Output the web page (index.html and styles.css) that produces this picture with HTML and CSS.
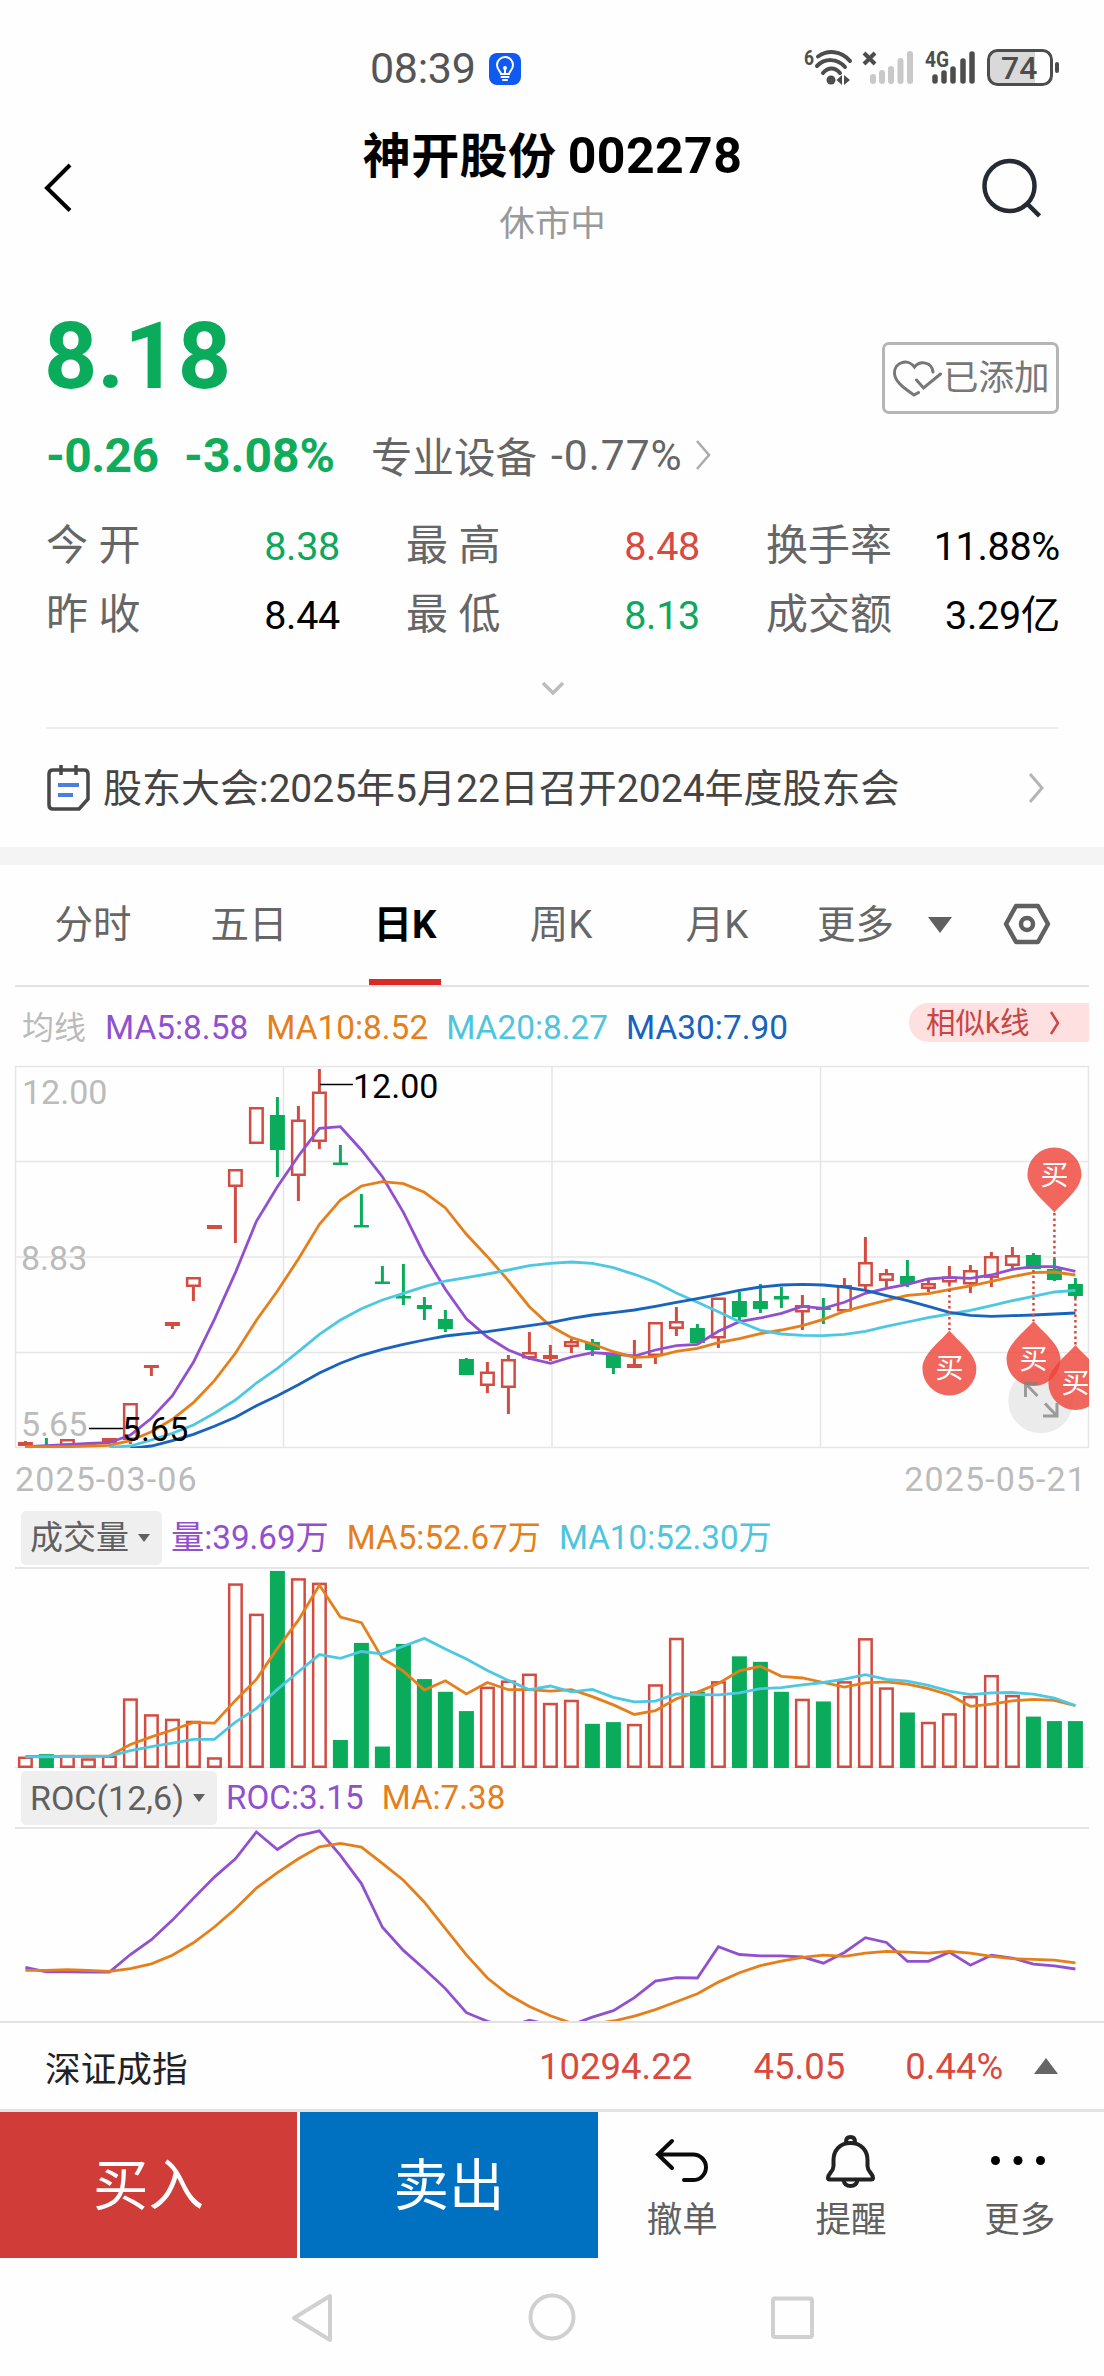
FILE: index.html
```html
<!DOCTYPE html>
<html lang="zh-CN">
<head>
<meta charset="utf-8">
<title>神开股份 002278</title>
<link rel="stylesheet" href="styles.css">
</head>
<body>
<div class="screen">
  <div class="status">
    <span class="clock">08:39</span>
    <svg class="bulb" width="32" height="32" viewBox="0 0 32 32"><rect width="32" height="32" rx="8" fill="#0f5af0"/><g fill="none" stroke="#fff" stroke-width="2" stroke-linecap="round"><path d="M12 21c0-2.500-4-4-4-9a8 8 0 0 1 16 0c0 5-4 6.500-4 9z"/><path d="M12.500 24h7M14 27h4M16 16v5"/><circle cx="16" cy="15" r="1"/></g></svg>
    <svg class="signals" width="270" height="44" viewBox="800 44 270 44">
      <g fill="#4d4d4d" font-family="Roboto, sans-serif" font-weight="700">
        <text x="804" y="65" font-size="21" textLength="10" lengthAdjust="spacingAndGlyphs">6</text>
        <text x="925" y="67" font-size="22" textLength="24" lengthAdjust="spacingAndGlyphs">4G</text>
        <circle cx="831" cy="80" r="4.500"/>
        <path d="M836.500 80l5.500-5v10zM844 75l6 5-6 5z"/>
      </g>
      <g fill="none" stroke="#4d4d4d" stroke-width="4" stroke-linecap="round">
        <path d="M818 56.500C827 50 841 50 850 61"/>
        <path d="M817 66C825 58 837 58 845 67"/>
        <path d="M823 73C828 67 835 67 840 73"/>
        <path d="M864 53l11 11M875 53l-11 11" stroke-linecap="butt"/>
      </g>
      <g stroke="#c9c9c9" stroke-width="6" stroke-linecap="round"><path d="M873 77v4M882 73v8M891 69v12M900.500 61v20M910 54v27"/></g>
      <g stroke="#4d4d4d" stroke-width="5.500" stroke-linecap="round"><path d="M935 77v4M944 73v8M953 69v12M963 61v20M972 54v27"/></g>
      <path d="M997 51h38v33h-38a8 8 0 0 1-8-8V59a8 8 0 0 1 8-8z" fill="#d9d9d9"/>
      <rect x="988.500" y="50.500" width="63" height="34" rx="9" fill="none" stroke="#4d4d4d" stroke-width="3"/>
      <path d="M1057 64v7" stroke="#4d4d4d" stroke-width="4" stroke-linecap="round"/>
      <text x="1001" y="79" font-family="Roboto, sans-serif" font-weight="500" font-size="32" fill="#4d4d4d">74</text>
    </svg>
  </div>

  <header class="header">
    <svg class="back" width="30" height="54" viewBox="44 161 30 54"><path d="M70 165L47 188l23 22.500" fill="none" stroke="#000" stroke-width="4"/></svg>
    <div class="heading">
      <h1 class="name">神开股份 <span class="code">002278</span></h1>
      <div class="session">休市中</div>
    </div>
    <svg class="search" width="60" height="60" viewBox="981 156 60 60"><g fill="none" stroke="#252a33" stroke-width="4.500"><circle cx="1009.500" cy="184" r="25"/><path d="M1026.500 201l13 13"/></g></svg>
  </header>

  <section class="quote">
    <div class="price-row">
      <div class="price">8.18</div>
      <div class="added">
        <svg width="50" height="40" viewBox="892 357 50 40"><path d="M918.500 391.500L914 394C905 388 895 381 894.500 372.500 894 361 908 357 914.500 366 920 359 932 361 933 371M916.500 379l7 8 17-14" fill="none" stroke="#777" stroke-width="3" stroke-linecap="round"/></svg>
        <span>已添加</span>
      </div>
    </div>
    <div class="change-row">
      <span class="chg">-0.26</span><span class="pct">-3.08%</span>
      <span class="sector">专业设备</span><span class="sector-pct">-0.77%</span>
      <svg width="18" height="32" viewBox="0 0 18 32"><path d="M2 2l12 14L2 30" fill="none" stroke="#aaa" stroke-width="2.500"/></svg>
    </div>
    <div class="stats">
      <div class="stat"><span class="lbl">今 开</span><span class="green">8.38</span></div>
      <div class="stat"><span class="lbl">最 高</span><span class="red">8.48</span></div>
      <div class="stat"><span class="lbl">换手率</span><span>11.88%</span></div>
      <div class="stat"><span class="lbl">昨 收</span><span>8.44</span></div>
      <div class="stat"><span class="lbl">最 低</span><span class="green">8.13</span></div>
      <div class="stat"><span class="lbl">成交额</span><span>3.29亿</span></div>
    </div>
    <div class="expand"><svg width="26" height="16" viewBox="0 0 26 16"><path d="M3 2l10 10L23 2" fill="none" stroke="#bdbdbd" stroke-width="3.500"/></svg></div>
    <div class="notice">
      <svg width="44" height="48" viewBox="47 764 44 48"><g fill="none" stroke="#484848" stroke-width="3.500"><path d="M53 770h31q4 0 4 4v25l-9 10H53q-4 0-4-4v-31q0-4 4-4zM61 765v10M76 765v10"/><path d="M58 785h21M58 795h15" stroke="#4a7fe0" stroke-width="4"/></g></svg>
      <span>股东大会:2025年5月22日召开2024年度股东会</span>
      <svg class="go" width="18" height="32" viewBox="0 0 18 32"><path d="M2 2l12 14L2 30" fill="none" stroke="#b5b5b5" stroke-width="3"/></svg>
    </div>
  </section>

  <nav class="tabs">
    <span>分时</span><span>五日</span><span class="on">日K</span><span>周K</span><span>月K</span>
    <span class="more">更多<svg width="24" height="16" viewBox="0 0 24 16"><path d="M0 0h24L12 16z" fill="#606060"/></svg></span>
    <svg class="gear" width="48" height="42" viewBox="1002 903 48 42"><g fill="none" stroke="#606060" stroke-width="4.500"><path d="M1015 906h22l10 18-10 18h-22l-10-18z" stroke-linejoin="round"/><circle cx="1026" cy="924" r="6"/></g></svg>
  </nav>

  <div class="legend">
    <span class="ma-title">均线</span><span class="purple">MA5:8.58</span><span class="orange">MA10:8.52</span><span class="cyan">MA20:8.27</span><span class="blue">MA30:7.90</span>
    <span class="similar">相似k线<svg width="12" height="24" viewBox="0 0 12 24"><path d="M2 1l7 11-7 11" fill="none" stroke="#d04444" stroke-width="2.500"/></svg></span>
  </div>

  <svg class="chart" width="1104" height="390" viewBox="0 10 1104 390">
    <defs>
      <clipPath id="plot"><rect x="15" y="16" width="1074" height="382"/></clipPath>
      <path id="pin" d="M0 0C7-9 27-23 27-38A27 27 0 0 0-27-38C-27-23-7-9 0 0z"/>
    </defs>
    <path d="M15.500 16.500h1073v381h-1073zM15 111.500h1074M15 207h1074M15 302.500h1074M283.500 16v382M552 16v382M820.500 16v382" fill="none" stroke="#e6e6e6" stroke-width="1.500"/>
    <g class="axis"><text x="22" y="54">12.00</text><text x="21" y="219.500">8.83</text><text x="21" y="386">5.65</text></g>
    <g clip-path="url(#plot)">
      <g id="candles"></g>
      <g id="averages"></g>
      <g class="mark"><path d="M320 34.500h33M89 378.500h34"/><text x="353" y="48">12.00</text><text x="122" y="391">5.65</text></g>
      <circle cx="1040.800" cy="350.700" r="32.500" fill="#ebebeb"/>
      <g class="dots"><path d="M1054.400 163v46M949.400 234v46M1033.500 220v51M1075.400 248v47"/></g>
      <g class="pins">
        <use href="#pin" transform="translate(1054.400 162.500)"/>
        <use href="#pin" transform="translate(949.400 280.500) scale(1 -1)"/>
        <use href="#pin" transform="translate(1033.500 271) scale(1 -1)"/>
        <use href="#pin" transform="translate(1075.400 295) scale(1 -1)"/>
      </g>
      <g class="pin-text"><text x="1054.400" y="135">买</text><text x="949.400" y="328">买</text><text x="1033.500" y="319">买</text><text x="1075.400" y="342.500">买</text></g>
      <path d="M1025.500 347v-13.500H1038M1026 334l11.500 12M1043 366h14v-13M1056.500 365.500L1045 353.500" fill="none" stroke="#808080" stroke-opacity=".75" stroke-width="3"/>
    </g>
  </svg>
  <div class="dates"><span>2025-03-06</span><span>2025-05-21</span></div>

  <div class="sub-head">
    <span class="pick vol-pick">成交量<i class="caret"></i></span><span class="purple">量:39.69万</span><span class="orange">MA5:52.67万</span><span class="cyan">MA10:52.30万</span>
  </div>
  <svg class="chart" width="1104" height="202" viewBox="0 67 1104 202">
    <path d="M15 68h1074" stroke="#e6e6e6" stroke-width="2"/><path d="M15 267.500h1074" stroke="#ececec"/>
    <g id="volume"></g>
  </svg>

  <div class="sub-head roc-head">
    <span class="pick roc-pick">ROC(12,6)<i class="caret"></i></span><span class="purple">ROC:3.15</span><span class="orange">MA:7.38</span>
  </div>
  <svg class="chart" width="1104" height="195" viewBox="0 326 1104 195">
    <path d="M15 328h1074" stroke="#e6e6e6" stroke-width="2"/>
    <g id="roc"></g>
  </svg>

  <div class="index">
    <span class="index-name">深证成指</span>
    <span class="idx-value">10294.22</span><span class="idx-change">45.05</span><span class="idx-pct">0.44%</span>
    <svg width="24" height="16" viewBox="0 0 24 16"><path d="M0 16h24L12 0z" fill="#666"/></svg>
  </div>

  <div class="actions">
    <div class="trade buy">买入</div>
    <div class="trade sell">卖出</div>
    <div class="tools">
      <div class="tool"><svg width="60" height="60" viewBox="652 2132 60 60"><path d="M672 2141l-14 13.500 14 13.500M658 2154.500h35a13 12.800 0 0 1 0 25.600h-9" fill="none" stroke="#0a0a0a" stroke-width="4" stroke-linecap="round"/></svg>撤单</div>
      <div class="tool"><svg width="60" height="60" viewBox="820 2132 60 60"><g fill="none" stroke="#222" stroke-width="4" stroke-linejoin="round"><path d="M845 2142q0-5 4.500-5t4.500 5M849.500 2143c-11 0-17 8-17 17v6c0 6-5.500 7-5.500 12q0 1.500 2 1.500h41q2 0 2-1.500c0-5-5.500-6-5.500-12v-6c0-9-6-17-17-17z"/><path d="M842.500 2180q1 6 7 6t7-6"/></g></svg>提醒</div>
      <div class="tool"><svg width="60" height="60" viewBox="990 2132 60 60"><g fill="#000"><circle cx="995.500" cy="2160.500" r="4.500"/><circle cx="1018" cy="2160.500" r="4.500"/><circle cx="1040.500" cy="2160.500" r="4.500"/></g></svg>更多</div>
    </div>
  </div>

  <svg class="navbar" width="1104" height="118" viewBox="0 2258 1104 118"><g fill="none" stroke="#d0d0d0" stroke-width="4" stroke-linejoin="round"><path d="M330 2296v44l-36-22z"/><circle cx="552" cy="2317" r="21.500"/><rect x="773" y="2298.500" width="39" height="38.500" rx="2"/></g></svg>
</div>
<script src="charts.js"></script>
</body>
</html>
```
FILE: charts.js
```js
const UP = '#d24c41', DOWN = '#0aac5c';
const PURPLE = '#9150cf', ORANGE = '#e57f1c', CYAN = '#4ec8e2', BLUE = '#1763bd';
const x = i => 25.4 + 21 * i;

// [direction, body top, body bottom, high, low]
const candles = [
  ['r',392,396,391,396],['g',395,397,388,397],['r',389,396,389,396],['r',393,396,393,396],['r',388,393,388,393],
  ['r',353,390,353,394],['r',315,318,315,326],['r',272,276,272,279],['r',227,237,227,251],['r',175,179,175,179],
  ['r',119,137,119,193],['r',57,94,57,94],['g',65,100,47,127],['r',69.500,126,56,151],['r',41.500,92,19,99],
  ['g',112.500,115,95,115],['g',175,177.500,144,177],['g',231.500,234,216,234],['g',246,248.500,214,255],['g',255,259,247,270],
  ['g',269,279,260,282],['g',309,325,308,325],['r',321.500,336,312,343],['r',309,338,305,364],['r',302,308.500,282,310],
  ['r',305,309,295,311],['r',291,297,289,303],['g',292,300,289,306],['g',304,318,304,324],['r',314,318,290,318],
  ['r',272,306,272,314],['r',271,279,257,286],['g',278,293,274,293],['r',247.500,288.500,248,298],['g',251,267,242,271],
  ['g',251,259,234,263],['g',246,249.500,237,258],['r',255,262.500,245,280],['g',258,260,248,274],['r',235,261.500,228,261],
  ['r',212,236.500,187,239],['r',223,231,219,237],['g',226,234,210,237],['r',233,239,228,242],['r',226.500,232.500,216,234],
  ['r',220,234.500,215,243],['r',206,228,202,237],['r',205,216,197,218],['g',205,219,203,219],['g',219,230,209,231],['g',234,246,228,248]
];

// Line series are scaled down to pixels when drawn.
const ma5 = [1190,1187,1184,1180,1178,1155,1105,1037,937,808,668,514,410,318,235,230,300,380,487,614,718,806,861,900,925,940,921,908,912,918,900,887,883,844,815,804,790,769,775,757,730,715,703,687,682,685,675,658,650,650,664];
const ma10 = [1190,1190,1190,1188,1186,1172,1145,1108,1058,992,910,811,723,627,523,450,408,395,401,427,474,553,620,692,770,828,863,882,905,922,920,904,895,878,866,851,840,827,808,784,767,751,736,731,719,708,694,680,668,666,675];
const ma20 = [1192,1188,1170,1150,1125,1090,1050,999,955,905,853,810,776,750,730,710,693,683,672,660,647,640,636,640,653,673,697,729,757,785,815,841,852,856,857,853,844,829,816,803,792,781,767,752,739,726,721];
const ma30 = [1195,1188,1172,1153,1129,1102,1067,1037,1004,969,940,916,898,883,870,858,851,845,836,827,818,805,795,788,780,769,757,746,734,721,711,705,703,705,711,721,737,752,769,787,796,799,797,795,792,789];
const volTop = [745,738,740,750,742,576,622,635,641,747,242,330,206,227,240,697,415,716,418,520,557,613,542,524,504,589,580,650,645,650,535,400,556,526,454,470,557,577,585,526,401,544,617,644,619,569,508,566,629,642,642];
const vma5 = [745,745,745,744,743,710,688,668,646,648,582,521,431,349,247,340,356,460,497,552,525,563,530,551,551,555,551,571,595,623,612,577,558,533,496,483,512,517,530,543,531,528,535,548,566,599,593,583,579,582,597];
const vma10 = [746,746,745,745,744,728,716,706,695,695,645,605,550,499,449,460,440,447,425,402,433,462,495,524,551,540,557,550,573,586,584,563,565,566,560,548,545,537,530,520,507,521,526,538,555,565,560,559,564,575,597];
const roc = [1357,1370,1370,1371,1371,1320,1277,1220,1157,1095,1042,964,1015,975,961,1032,1114,1241,1308,1362,1419,1489,1514,1530,1511,1524,1524,1502,1483,1445,1397,1387,1388,1297,1320,1324,1324,1327,1345,1314,1271,1285,1340,1340,1313,1351,1322,1330,1348,1353,1362];
const rocMa = [1366,1366,1364,1366,1369,1361,1347,1322,1286,1240,1187,1127,1082,1042,1007,997,1008,1055,1104,1168,1245,1321,1388,1436,1471,1498,1519,1522,1513,1499,1480,1457,1434,1400,1373,1352,1339,1328,1322,1325,1316,1311,1313,1316,1311,1316,1325,1332,1334,1336,1344];

const PRICE_SCALE = 3, SUB_SCALE = 2.904;

const line = (data, color, scale, start = 0) =>
  `<polyline fill="none" stroke="${color}" stroke-width="2.8" points="${data.map((v, i) => x(i + start).toFixed(1) + ',' + (v / scale).toFixed(1)).join(' ')}"/>`;

const body = (cx, top, bottom, up) => up && bottom - top > 5
  ? `<rect x="${cx - 6.25}" y="${top + 1.25}" width="12.5" height="${bottom - top - 2.5}" fill="#fefefe" stroke="${UP}" stroke-width="2.5"/>`
  : `<rect x="${cx - 7.5}" y="${top}" width="15" height="${bottom - top}" fill="${up ? UP : DOWN}"/>`;

document.getElementById('candles').innerHTML = candles.map(([d, t, b, h, l], i) =>
  `<path d="M${x(i)} ${h}V${l}" stroke="${d === 'r' ? UP : DOWN}" stroke-width="3"/>` + body(x(i), t, b, d === 'r')).join('');
document.getElementById('averages').innerHTML =
  line(ma5, PURPLE, PRICE_SCALE) + line(ma10, ORANGE, PRICE_SCALE) + line(ma20, CYAN, PRICE_SCALE, 4) + line(ma30, BLUE, PRICE_SCALE, 5);
const falling = new Set([1, 12, 15, 16, 17, 18, 19, 20, 21, 27, 28, 32, 34, 35, 36, 38, 42, 48, 49, 50]);
document.getElementById('volume').innerHTML =
  volTop.map((v, i) => body(x(i), v / SUB_SCALE, 268, !falling.has(i))).join('') + line(vma5, ORANGE, SUB_SCALE) + line(vma10, CYAN, SUB_SCALE);
document.getElementById('roc').innerHTML = line(roc, PURPLE, SUB_SCALE) + line(rocMa, ORANGE, SUB_SCALE);
```
FILE: styles.css
```css
* { box-sizing: border-box; }
body { margin: 0; background: #fefefe; color: #000; font-family: Roboto, "Noto Sans CJK SC", sans-serif; }
svg { display: block; flex: none; }
.screen { width: 1104px; height: 2376px; overflow: hidden; white-space: nowrap; }
.green { color: #0fa65d; }
.red { color: #d84a3f; }
.purple { color: #9150cf; }
.orange { color: #e57f1c; }
.cyan { color: #4ec5df; }
.blue { color: #1763bd; }

.status { height: 100px; padding: 0 34px 0 370px; display: flex; align-items: flex-start; }
.clock { font-size: 43px; line-height: 50px; margin-top: 43px; width: 119px; color: #555; letter-spacing: -.3px; }
.bulb { margin-top: 53px; }
.signals { margin: 44px 0 0 auto; }

.header { height: 176px; padding: 0 63px 0 44px; display: flex; align-items: center; justify-content: space-between; }
.heading { align-self: flex-start; padding: 26px 0 0 50px; text-align: center; }
.name { margin: 0; font-size: 48px; line-height: 60px; font-weight: 700; letter-spacing: .4px; }
.code { font-size: 50px; margin-left: -1px; }
.session { margin-top: 12px; font-size: 35.500px; line-height: 50px; color: #999; }

.quote { padding: 30px 45px 0 46px; }
.price-row { display: flex; justify-content: space-between; height: 110px; }
.price { font-size: 93px; line-height: 101px; margin-left: -2px; font-weight: 700; color: #0aac5c; }
.added { display: flex; align-items: center; gap: 1px; width: 177px; height: 72px; margin-top: 36px; padding-left: 7px; border: 3px solid #b5b5b5; border-radius: 7px; color: #777; font-size: 35.500px; line-height: 40px; }
.change-row { display: flex; align-items: center; height: 78px; }
.chg, .pct { font-size: 48px; font-weight: 700; color: #0fac5c; }
.chg { width: 138px; letter-spacing: -.6px; }
.pct { width: 187px; }
.sector { font-size: 41.500px; width: 180px; color: #666; }
.sector-pct { font-size: 42.500px; width: 144px; color: #666; letter-spacing: 1px; }
.stats { margin-top: 18px; display: grid; grid-template-columns: repeat(3, 292px); column-gap: 68px; }
.stat { display: flex; justify-content: space-between; align-items: center; height: 69px; font-size: 39.500px; line-height: 50px; }
.stat > :last-child { margin-right: -2px; letter-spacing: -.3px; }
.lbl { font-size: 42px; margin-top: -1px; color: #666; }
.expand { height: 77px; display: flex; justify-content: center; align-items: center; }
.notice { height: 120px; border-top: 2px solid #eee; display: flex; align-items: center; font-size: 39px; color: #444; }
.notice span { margin: -6px 0 0 12px; }
.notice svg:first-child { margin-left: 1px; }
.go { margin: 0 13px 0 auto; }

.tabs { height: 140px; margin: 0; padding: 0 15px; border-top: 18px solid #f4f4f4; display: flex; align-items: center; font-size: 38.500px; color: #666; position: relative; }
.tabs::after { content: ""; position: absolute; left: 15px; right: 15px; bottom: 0; height: 2px; background: #e2e2e2; }
.tabs > span { width: 156px; height: 120px; line-height: 120px; text-align: center; align-self: flex-start; }
.tabs > span.on { color: #000; font-weight: 700; position: relative; }
.tabs > span.on::after { content: ""; position: absolute; left: 42px; bottom: 0; width: 72px; height: 6px; background: #d92b26; }
.tabs > span.more { width: 191px; padding-left: 22px; display: flex; align-items: center; gap: 34px; }
.gear { margin-left: 17px; margin-top: -4px; }

.legend { height: 73px; padding: 0 15px 0 22px; display: flex; align-items: flex-start; font-size: 33.400px; line-height: 40px; }
.legend > span { margin-top: 21px; margin-right: 18px; }
.legend > .ma-title { font-size: 32px; margin-right: 19px; color: #bbb; }
.legend > .similar { margin: 16px 0 0 auto; width: 180px; height: 39px; padding-left: 17px; display: flex; align-items: center; gap: 20px; background: #fee0e0; border-radius: 20px 0 0 20px; color: #c84545; font-size: 29.500px; line-height: 42px; }

.chart { font-family: Roboto, "Noto Sans CJK SC", sans-serif; }
.axis { font-size: 34px; fill: #bbb; }
.mark { font-size: 34px; }
.mark path { stroke: #000; stroke-width: 1.500; }
.dots { fill: none; stroke: #d24c41; stroke-width: 2.500; stroke-dasharray: 2.500 3; }
.pins { fill: #ee4439; }
.pins use { opacity: .82; }
.pin-text { font-size: 28px; fill: #fff; text-anchor: middle; }
.dates { height: 58px; padding: 0 17px 0 15px; display: flex; justify-content: space-between; align-items: center; font-size: 34px; letter-spacing: 1.100px; color: #bbb; }

.sub-head { height: 59px; padding-left: 21px; display: flex; align-items: center; font-size: 33.200px; line-height: 52px; }
.roc-head { height: 57px; }
.sub-head > span { margin-right: 18px; }
.sub-head > .pick { height: 54px; padding-left: 9px; margin-right: 9px; border-radius: 5px; background: #efefef; color: #606060; display: flex; align-items: center; gap: 9px; }
.sub-head > .vol-pick { width: 141px; font-size: 33px; }
.sub-head > .roc-pick { width: 196px; font-size: 34px; }
.caret { border: 6px solid transparent; border-top: 8px solid #606060; border-bottom: 0; }

.index { height: 91px; border-top: 2px solid #e2e2e2; border-bottom: 3px solid #e2e2e2; padding: 0 46px; display: flex; align-items: center; font-size: 36.500px; color: #d84a3f; }
.index-name { width: 495px; margin-left: -1px; font-size: 35.700px; color: #222; }
.idx-value { width: 215px; }
.idx-change { width: 152px; }
.idx-pct { width: 129px; }

.actions { height: 146px; display: flex; }
.trade { font-size: 55.500px; line-height: 150px; color: #fff; text-align: center; }
.buy { width: 297px; margin-right: 3px; background: #d03c38; }
.sell { width: 298px; background: #0070c0; }
.tools { flex: 1; display: flex; }
.tool { flex: 1; padding-top: 20px; display: flex; flex-direction: column; align-items: center; font-size: 35.500px; line-height: 56px; color: #606060; }
```
